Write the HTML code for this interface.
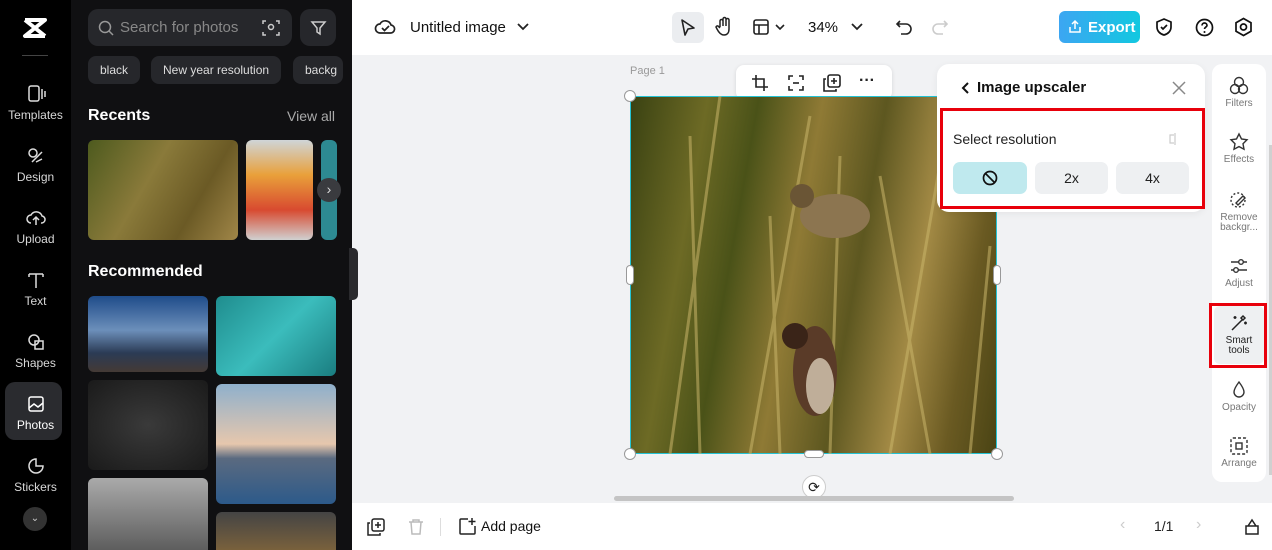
<!DOCTYPE html><html style="width:1272px;height:550px;overflow:hidden"><head><style>
*{margin:0;padding:0;box-sizing:border-box}
body{width:1272px;height:550px;overflow:hidden;font-family:"Liberation Sans",sans-serif;background:#f1f2f4;position:relative}
.a{position:absolute}
.rail{left:0;top:0;width:71px;height:550px;background:#000}
.ri{position:absolute;left:0;width:71px;text-align:center;color:#d8d8d8;font-size:12px}
.ri svg{display:block;margin:0 auto 4px}
.pan{left:71px;top:0;width:281px;height:550px;background:#101012;color:#fff;overflow:hidden}
.chip{position:absolute;top:56px;height:28px;background:#26272b;border-radius:8px;color:#ddd;font-size:12px;line-height:28px;padding:0 12px}
.th{position:absolute;border-radius:6px;overflow:hidden}
.rt{position:absolute;left:1212px;width:54px;text-align:center;color:#777;font-size:10px;line-height:10px}
.rt svg{display:block;margin:0 auto 3px}
</style></head><body>
<div class="a rail">
 <svg class="a" style="left:22px;top:17px" width="26" height="22" viewBox="0 0 26 22"><path d="M3 3h20L3 19h20M3 3l20 16" stroke="#fff" stroke-width="4" fill="none" stroke-linejoin="round"/></svg>
 <div class="a" style="left:22px;top:55px;width:26px;height:1px;background:#444"></div>
 <div class="ri" style="top:84px"><svg width="20" height="20"><rect x="3" y="2" width="10" height="15" rx="2" stroke="#ddd" fill="none" stroke-width="1.5"/><path d="M16 5v10M19 7v6" stroke="#ddd" stroke-width="1.5"/></svg>Templates</div>
 <div class="ri" style="top:146px"><svg width="20" height="20"><circle cx="7" cy="7" r="4" stroke="#ddd" fill="none" stroke-width="1.5"/><path d="M6 16l10-10M10 16l6-3" stroke="#ddd" stroke-width="1.5"/></svg>Design</div>
 <div class="ri" style="top:208px"><svg width="20" height="20"><path d="M5 15a4 4 0 010-8 6 6 0 0111 1 3.5 3.5 0 01-1 7M10 17V9M7 12l3-3 3 3" stroke="#ddd" fill="none" stroke-width="1.5"/></svg>Upload</div>
 <div class="ri" style="top:270px"><svg width="20" height="20"><path d="M3 4h14M10 4v14M3 4v3M17 4v3" stroke="#ddd" stroke-width="1.5"/></svg>Text</div>
 <div class="ri" style="top:332px"><svg width="20" height="20"><circle cx="8" cy="8" r="5" stroke="#ddd" fill="none" stroke-width="1.5"/><rect x="9" y="9" width="8" height="8" stroke="#ddd" fill="none" stroke-width="1.5"/></svg>Shapes</div>
 <div class="a" style="left:5px;top:382px;width:57px;height:58px;background:#2a2b2f;border-radius:10px"></div>
 <div class="ri" style="top:394px;color:#fff"><svg width="20" height="20"><rect x="3" y="3" width="14" height="14" rx="2" stroke="#fff" fill="none" stroke-width="1.5"/><path d="M3 14l5-4 4 3 5-4" stroke="#fff" fill="none" stroke-width="1.5"/></svg>Photos</div>
 <div class="ri" style="top:456px"><svg width="20" height="20"><path d="M10 3a7 7 0 107 7h-7z" stroke="#ddd" fill="none" stroke-width="1.5"/></svg>Stickers</div>
 <div class="a" style="left:23px;top:507px;width:24px;height:24px;border-radius:12px;background:#333;color:#ccc;font-size:10px;text-align:center;line-height:24px">⌄</div>
</div>
<div class="a pan">
 <div class="a" style="left:17px;top:9px;width:204px;height:37px;background:#26272b;border-radius:10px;color:#888;font-size:15px;line-height:37px;padding-left:32px">Search for photos</div>
 <svg class="a" style="left:27px;top:20px" width="16" height="16"><circle cx="7" cy="7" r="5.5" stroke="#999" fill="none" stroke-width="1.5"/><path d="M11 11l4 4" stroke="#999" stroke-width="1.5"/></svg>
 <svg class="a" style="left:191px;top:19px" width="18" height="18"><path d="M1 5V2h3M14 2h3v3M17 13v3h-3M4 16H1v-3" stroke="#ccc" fill="none" stroke-width="1.5"/><circle cx="9" cy="8" r="2.5" stroke="#ccc" fill="none" stroke-width="1.5"/></svg>
 <div class="a" style="left:229px;top:9px;width:36px;height:37px;background:#26272b;border-radius:10px"></div>
 <svg class="a" style="left:238px;top:19px" width="18" height="18"><path d="M3 3h13l-5 6v6l-3-2V9z" stroke="#ccc" fill="none" stroke-width="1.5"/></svg>
 <div class="chip" style="left:17px">black</div>
 <div class="chip" style="left:80px">New year resolution</div>
 <div class="chip" style="left:222px;width:50px;overflow:hidden">backg</div>
 <div class="a" style="left:17px;top:107px;font-size:16px;font-weight:bold">Recents</div>
 <div class="a" style="left:216px;top:108px;font-size:14px;color:#aaa">View all</div>
 <div class="th" style="left:17px;top:140px;width:150px;height:100px;background:linear-gradient(120deg,#4d5a1e,#8a7a3a 40%,#6b5a25 70%,#a08648)"></div>
 <div class="th" style="left:175px;top:140px;width:67px;height:100px;background:linear-gradient(#cfd5d8,#e9a03a 35%,#d84a30 70%,#d0d0d0)"></div>
 <div class="th" style="left:250px;top:140px;width:16px;height:100px;background:#2d8a92"></div>
 <div class="a" style="left:246px;top:178px;width:24px;height:24px;border-radius:12px;background:#3a3b3f;color:#ddd;text-align:center;line-height:22px;font-size:14px">›</div>
 <div class="a" style="left:17px;top:263px;font-size:16px;font-weight:bold">Recommended</div>
 <div class="th" style="left:17px;top:296px;width:120px;height:76px;background:linear-gradient(#1f4c8a,#6c8fba 45%,#2b3b55 75%,#443a35)"></div>
 <div class="th" style="left:145px;top:296px;width:120px;height:80px;background:linear-gradient(135deg,#1f8d8e,#3bbcbc 50%,#1a7d80)"></div>
 <div class="th" style="left:17px;top:380px;width:120px;height:90px;background:radial-gradient(#3a3a3a,#1a1a1a)"></div>
 <div class="th" style="left:145px;top:384px;width:120px;height:120px;background:linear-gradient(#8fb0cc,#e6c7ad 50%,#5a6a80 62%,#2d5a8a)"></div>
 <div class="th" style="left:17px;top:478px;width:120px;height:80px;background:linear-gradient(#aaa,#555)"></div>
 <div class="th" style="left:145px;top:512px;width:120px;height:50px;background:linear-gradient(#444,#8a6a3a)"></div>
</div>
<div class="a" style="left:349px;top:248px;width:9px;height:52px;background:#2a2a2d;border-radius:0 5px 5px 0"></div>
<div class="a" style="left:352px;top:0;width:920px;height:55px;background:#fff"></div>
<svg class="a" style="left:374px;top:17px" width="22" height="20"><path d="M6 16a4.5 4.5 0 010-9 6 6 0 0111 1 4 4 0 01-1 8z" stroke="#222" fill="none" stroke-width="1.7"/><path d="M8 11l2.5 2.5L15 9" stroke="#222" fill="none" stroke-width="1.7"/></svg>
<div class="a" style="left:410px;top:19px;font-size:15px;color:#111">Untitled image</div>
<svg class="a" style="left:517px;top:22px" width="12" height="10"><path d="M1 2l5 5 5-5" stroke="#222" fill="none" stroke-width="1.8"/></svg>
<div class="a" style="left:672px;top:12px;width:32px;height:31px;background:#ebedf0;border-radius:6px"></div>
<svg class="a" style="left:679px;top:18px" width="18" height="20"><path d="M3 2l12 8-6 1-3 6z" stroke="#222" fill="none" stroke-width="1.6" stroke-linejoin="round"/></svg>
<svg class="a" style="left:714px;top:16px" width="20" height="22"><path d="M6 11V5a1.5 1.5 0 013 0v5V3a1.5 1.5 0 013 0v7V4a1.5 1.5 0 013 0v9c0 4-2 6-5 6s-5-2-7-6l-1-2a1.5 1.5 0 012-1l2 2" stroke="#222" fill="none" stroke-width="1.5"/></svg>
<svg class="a" style="left:753px;top:19px" width="32" height="18"><rect x="1" y="1" width="14" height="14" rx="2" stroke="#222" fill="none" stroke-width="1.6"/><path d="M1 6h14M6 6v9M23 6l4 4 4-4" stroke="#222" fill="none" stroke-width="1.6"/></svg>
<div class="a" style="left:808px;top:19px;font-size:15px;color:#111">34%</div>
<svg class="a" style="left:851px;top:22px" width="12" height="10"><path d="M1 2l5 5 5-5" stroke="#222" fill="none" stroke-width="1.8"/></svg>
<svg class="a" style="left:895px;top:18px" width="18" height="18"><path d="M5 3L2 6l3 3M2 6h9a5 5 0 010 10H6" stroke="#222" fill="none" stroke-width="1.6"/></svg>
<svg class="a" style="left:931px;top:18px" width="18" height="18"><path d="M13 3l3 3-3 3M16 6H7a5 5 0 000 10h5" stroke="#ccc" fill="none" stroke-width="1.6"/></svg>
<div class="a" style="left:1059px;top:11px;width:81px;height:32px;border-radius:6px;background:linear-gradient(90deg,#3ca6f2,#12c8e0);color:#fff;font-weight:bold;font-size:15px;line-height:33px;padding-left:29px">Export</div>
<svg class="a" style="left:1068px;top:19px" width="14" height="15"><path d="M4 5l3-3 3 3M7 2v8M2 8v5h10V8" stroke="#fff" fill="none" stroke-width="1.5"/></svg>
<svg class="a" style="left:1155px;top:17px" width="18" height="20"><path d="M9 2l7 3v5c0 4-3 7-7 8-4-1-7-4-7-8V5z" stroke="#111" fill="none" stroke-width="1.7"/><path d="M6 10l2 2 4-4" stroke="#111" fill="none" stroke-width="1.7"/></svg>
<svg class="a" style="left:1195px;top:18px" width="19" height="19"><circle cx="9.5" cy="9.5" r="8" stroke="#111" fill="none" stroke-width="1.7"/><path d="M7 7.5a2.5 2.5 0 115 0c0 1.5-2.5 1.7-2.5 3.5" stroke="#111" fill="none" stroke-width="1.7"/><circle cx="9.5" cy="14" r="1" fill="#111"/></svg>
<svg class="a" style="left:1234px;top:17px" width="19" height="20"><path d="M9.5 1.5l7.5 4.3v8.4l-7.5 4.3L2 14.2V5.8z" stroke="#111" fill="none" stroke-width="1.7"/><circle cx="9.5" cy="10" r="3" stroke="#111" fill="none" stroke-width="1.7"/></svg>
<div class="a" style="left:630px;top:65px;font-size:11px;color:#999">Page 1</div>
<div class="a" style="left:736px;top:65px;width:156px;height:35px;background:#fff;border-radius:8px;box-shadow:0 1px 4px rgba(0,0,0,.12)"></div>
<svg class="a" style="left:751px;top:74px" width="18" height="18"><path d="M5 1v12h12M1 5h12v12" stroke="#222" fill="none" stroke-width="1.6"/></svg>
<svg class="a" style="left:787px;top:74px" width="18" height="18"><path d="M2 6V2h4M12 2h4v4M16 12v4h-4M6 16H2v-4" stroke="#222" fill="none" stroke-width="1.6"/><path d="M6 9h6" stroke="#222" stroke-width="1.6"/></svg>
<svg class="a" style="left:823px;top:74px" width="18" height="18"><rect x="5" y="1" width="12" height="12" rx="2" stroke="#222" fill="none" stroke-width="1.6"/><path d="M3 5H1v12h12v-2M8 7h6M11 4v6" stroke="#222" fill="none" stroke-width="1.6"/></svg>
<div class="a" style="left:859px;top:72px;font-size:16px;font-weight:bold;color:#222">···</div>
<div class="a" style="left:630px;top:96px;width:367px;height:358px;border:1.5px solid #24c3d4;background:
linear-gradient(100deg,#3a4212 0%,#6d6a25 18%,#4a5218 30%,#8f7a35 45%,#5d5720 60%,#a38a45 75%,#6a5a22 88%,#4a4414 100%);"></div>
<svg class="a" style="left:630px;top:96px" width="367" height="358"><g stroke="#c9b46a" stroke-width="3" opacity=".55" fill="none"><path d="M40 358L90 0M70 358L60 40M120 358L180 20M200 358L210 60M260 358L320 10M300 358L250 80M150 358L140 120M340 358L360 150"/></g><ellipse cx="205" cy="120" rx="35" ry="22" fill="#8c7550"/><circle cx="172" cy="100" r="12" fill="#6a5535"/><ellipse cx="185" cy="275" rx="22" ry="45" fill="#5a3b28"/><circle cx="165" cy="240" r="13" fill="#3a2418"/><ellipse cx="190" cy="290" rx="14" ry="28" fill="#d8ccb5" opacity=".8"/></svg>
<div class="a" style="left:624px;top:90px;width:12px;height:12px;border-radius:6px;background:#fff;border:1px solid #999"></div>
<div class="a" style="left:624px;top:448px;width:12px;height:12px;border-radius:6px;background:#fff;border:1px solid #999"></div>
<div class="a" style="left:991px;top:448px;width:12px;height:12px;border-radius:6px;background:#fff;border:1px solid #999"></div>
<div class="a" style="left:626px;top:265px;width:8px;height:20px;border-radius:4px;background:#fff;border:1px solid #999"></div>
<div class="a" style="left:993px;top:265px;width:8px;height:20px;border-radius:4px;background:#fff;border:1px solid #999"></div>
<div class="a" style="left:804px;top:450px;width:20px;height:8px;border-radius:4px;background:#fff;border:1px solid #999"></div>
<div class="a" style="left:802px;top:475px;width:24px;height:24px;border-radius:12px;background:#fff;border:1px solid #ccc;text-align:center;line-height:22px;font-size:14px;color:#222">⟳</div>
<div class="a" style="left:614px;top:496px;width:400px;height:5px;border-radius:3px;background:#c4c4c4"></div>
<div class="a" style="left:937px;top:64px;width:268px;height:148px;background:#fff;border-radius:12px;box-shadow:0 2px 8px rgba(0,0,0,.06)"></div>
<svg class="a" style="left:960px;top:81px" width="10" height="14"><path d="M8 2L3 7l5 5" stroke="#111" fill="none" stroke-width="2"/></svg>
<div class="a" style="left:977px;top:79px;font-size:15px;font-weight:bold;color:#111">Image upscaler</div>
<svg class="a" style="left:1172px;top:81px" width="14" height="14"><path d="M1 1l12 12M13 1L1 13" stroke="#888" stroke-width="1.5"/></svg>
<div class="a" style="left:940px;top:108px;width:265px;height:101px;border:3px solid #e8000b"></div>
<div class="a" style="left:953px;top:131px;font-size:14px;color:#222">Select resolution</div>
<svg class="a" style="left:1169px;top:133px" width="12" height="12"><path d="M6 0v12M5 2H1v8h4" stroke="#ccc" fill="none" stroke-width="1.2"/></svg>
<div class="a" style="left:953px;top:162px;width:74px;height:32px;border-radius:7px;background:#bfe9ee"></div>
<svg class="a" style="left:982px;top:170px" width="16" height="16"><circle cx="8" cy="8" r="6.5" stroke="#111" fill="none" stroke-width="1.7"/><path d="M3.5 3.5l9 9" stroke="#111" stroke-width="1.7"/></svg>
<div class="a" style="left:1035px;top:162px;width:73px;height:32px;border-radius:7px;background:#eef0f2;text-align:center;line-height:32px;font-size:14px;color:#222">2x</div>
<div class="a" style="left:1116px;top:162px;width:73px;height:32px;border-radius:7px;background:#eef0f2;text-align:center;line-height:32px;font-size:14px;color:#222">4x</div>
<div class="a" style="left:1212px;top:64px;width:54px;height:418px;background:#fff;border-radius:10px"></div>
<div class="a" style="left:1269px;top:145px;width:3px;height:330px;background:#d0d0d0"></div>
<div class="rt" style="top:76px"><svg width="20" height="20"><circle cx="10" cy="6" r="4.5" stroke="#333" fill="none" stroke-width="1.4"/><circle cx="6" cy="13" r="4.5" stroke="#333" fill="none" stroke-width="1.4"/><circle cx="14" cy="13" r="4.5" stroke="#333" fill="none" stroke-width="1.4"/></svg>Filters</div>
<div class="rt" style="top:132px"><svg width="20" height="20"><path d="M10 2l2.5 5 5.5.8-4 3.9 1 5.5L10 14.6 5 17.2l1-5.5-4-3.9 5.5-.8z" stroke="#333" fill="none" stroke-width="1.4"/></svg>Effects</div>
<div class="rt" style="top:190px"><svg width="20" height="20"><circle cx="9" cy="10" r="7" stroke="#333" fill="none" stroke-width="1.4" stroke-dasharray="2 2"/><path d="M7 13l7-7 2 2-7 7z" stroke="#333" fill="none" stroke-width="1.4"/></svg>Remove<br>backgr...</div>
<div class="rt" style="top:256px"><svg width="20" height="20"><path d="M2 6h16M2 14h16" stroke="#333" stroke-width="1.4"/><circle cx="12" cy="6" r="2.3" fill="#fff" stroke="#333" stroke-width="1.4"/><circle cx="7" cy="14" r="2.3" fill="#fff" stroke="#333" stroke-width="1.4"/></svg>Adjust</div>
<div class="a" style="left:1214px;top:306px;width:50px;height:58px;background:#eef0f2;border-radius:6px"></div>
<div class="a" style="left:1209px;top:303px;width:58px;height:65px;border:3px solid #e8000b"></div>
<div class="rt" style="top:313px;color:#222"><svg width="20" height="20"><path d="M3 17l10-10M12 5l2-2 2 2-2 2zM15 10h3M16.5 8.5v3M6 3v3M4.5 4.5h3" stroke="#222" fill="none" stroke-width="1.5"/></svg>Smart<br>tools</div>
<div class="rt" style="top:380px"><svg width="20" height="20"><path d="M10 2c3 4 5 7 5 10a5 5 0 01-10 0c0-3 2-6 5-10z" stroke="#333" fill="none" stroke-width="1.4"/></svg>Opacity</div>
<div class="rt" style="top:436px"><svg width="20" height="20"><rect x="2" y="2" width="16" height="16" rx="2" stroke="#333" fill="none" stroke-width="1.4" stroke-dasharray="3 2"/><rect x="7" y="7" width="6" height="6" stroke="#333" fill="none" stroke-width="1.4"/></svg>Arrange</div>
<div class="a" style="left:352px;top:503px;width:920px;height:47px;background:#fff"></div>
<svg class="a" style="left:367px;top:518px" width="18" height="18"><rect x="5" y="1" width="12" height="12" rx="2" stroke="#222" fill="none" stroke-width="1.5"/><path d="M3 5H1v12h12v-2M8 7h6M11 4v6" stroke="#222" fill="none" stroke-width="1.5"/></svg>
<svg class="a" style="left:408px;top:518px" width="16" height="18"><path d="M1 4h14M5 4V2h6v2M3 4l1 12h8l1-12" stroke="#bbb" fill="none" stroke-width="1.5"/></svg>
<div class="a" style="left:440px;top:518px;width:1px;height:18px;background:#ddd"></div>
<svg class="a" style="left:458px;top:517px" width="19" height="19"><path d="M10 2H3a1 1 0 00-1 1v13a1 1 0 001 1h13a1 1 0 001-1V9" stroke="#222" fill="none" stroke-width="1.5"/><path d="M14 1v7M10.5 4.5h7" stroke="#222" stroke-width="1.5"/></svg>
<div class="a" style="left:481px;top:518px;font-size:14px;color:#111">Add page</div>
<div class="a" style="left:1120px;top:516px;font-size:16px;color:#ccc">‹</div>
<div class="a" style="left:1154px;top:518px;font-size:14px;color:#222">1/1</div>
<div class="a" style="left:1196px;top:516px;font-size:16px;color:#ccc">›</div>
<svg class="a" style="left:1243px;top:517px" width="18" height="18"><path d="M3 17h12V9H3zM5 9l4-6 4 6" stroke="#222" fill="none" stroke-width="1.5"/></svg>
</body></html>
